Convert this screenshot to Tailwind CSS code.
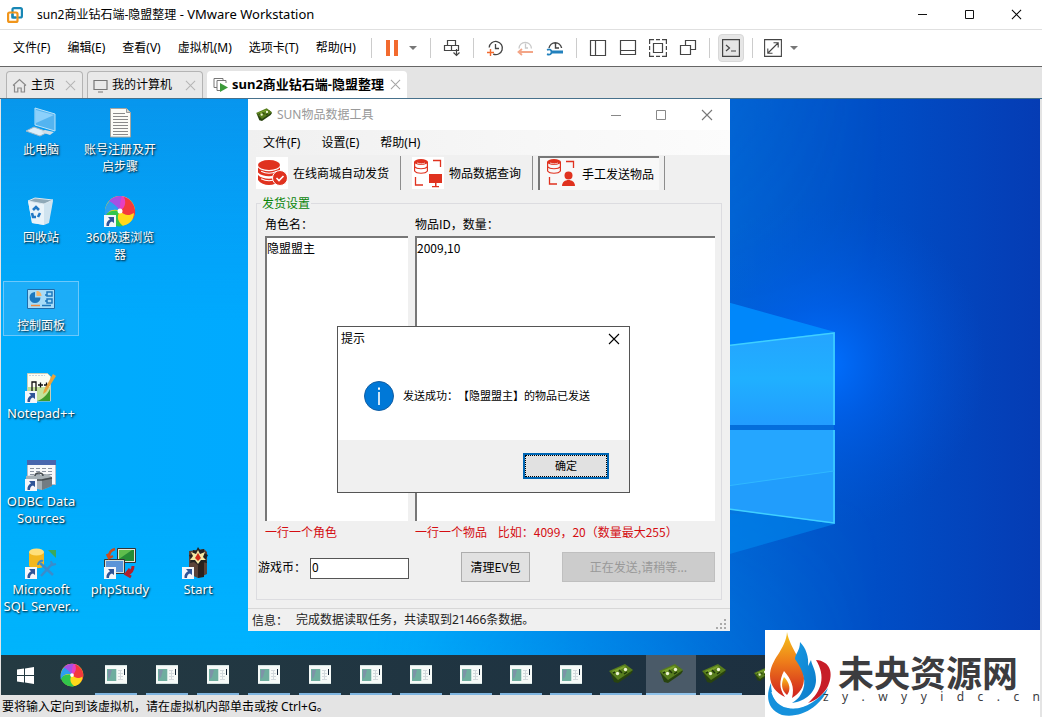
<!DOCTYPE html>
<html lang="zh-CN">
<head>
<meta charset="utf-8">
<title>sun2商业钻石端-隐盟整理 - VMware Workstation</title>
<script src="https://cdn.jsdelivr.net/npm/@tailwindcss/browser@4"></script>
</head>
<body class="flex h-screen flex-col overflow-hidden bg-[#e4e4e4] font-['Noto_Sans','Noto_Sans_CJK_SC',sans-serif] text-xs text-black">

<svg class="hidden" aria-hidden="true">
  <defs>
    <symbol id="shortcut" viewBox="0 0 12 12"><path fill="#f4f6fa" d="M0 0h12v12H0z"/><path fill="#2f5597" d="M4 2h6v6L8 6.500C6 7 5 8.500 5 11H2.500C2 8 3.500 5.500 6 4.300z"/></symbol>
    <symbol id="x" viewBox="0 0 12 12"><path d="m1 1 10 10M11 1 1 11" fill="none" stroke="currentColor" stroke-width="1.100"/></symbol>
    <symbol id="app" viewBox="0 0 22 19">
      <path fill="#f6faf8" d="M0 0h22v19H0z"/><path fill="#d3e2e0" d="M0 0h22v1H0zM0 18h22v1H0z"/>
      <path fill="#6fae9f" d="M2 4h9v12H2z"/><path fill="#7d93a8" d="M3 5h4l-2 7-2 2z"/><path fill="#cfe6df" d="M11 4h1v12h-1z"/>
      <path stroke="#d3dadd" d="M13 5.500h4M13 8.500h5M13 11.500h5M13 14.500h5M15.500 5v10"/><path fill="#123" d="M19 4h1v6h-1z"/>
    </symbol>
    <symbol id="card" viewBox="0 0 24 20">
      <path fill="#28430f" d="m1 8 3-1 16-4 4 4-2 3-13 9-4-1z"/><path fill="#577d1d" d="m0 7 16-7 8 6L9 16z"/>
      <path fill="#7ba32d" d="m3 7 12-5 2 1L5 9z"/><circle cx="8.500" cy="9.500" r="1.700" fill="#eff5d2"/><circle cx="16.500" cy="5.500" r="1.700" fill="#eff5d2"/>
      <path stroke="#1d330c" stroke-width="1.500" d="m10 6 3 3M18 8l-3 2M6 8l-2 1"/>
    </symbol>
    <symbol id="swirl" viewBox="0 0 32 32">
      <circle cx="16" cy="16" r="15" fill="#ffd91a"/>
      <path fill="#e73fc0" d="M5 6A15 15 0 0 1 25 4c2 5-3 10-9 12-3-1-2-7-11-10z"/>
      <path fill="#f4393c" d="M20 2c10 3 14 14 9 22-5-1-10-5-13-8 4-2 7-8 4-14z"/>
      <path fill="#ffd91a" d="M30 18c0 8-7 13-14 13-2-5-2-11 0-15 5 5 9 5 14 2z"/>
      <path fill="#31c64b" d="M19 31C11 33 3 27 1 20c5-5 10-5 15-4-4 6-2 11 3 15z"/>
      <path fill="#2d9ef0" d="M1 22C0 14 2 8 8 4c6 2 8 7 8 12-7-3-12 0-15 6z"/>
      <path fill="#a650e4" d="M5 6c4-4 8-5 13-5-2 4-2 10-2 15-3-5-7-8-11-10z"/>
      <circle cx="16" cy="16" r="2.500" fill="#fff"/>
    </symbol>
    <symbol id="db" viewBox="0 0 14 15" preserveAspectRatio="none"><ellipse cx="7" cy="3" rx="7" ry="3" fill="currentColor"/><path d="M.6 3v9c2 3 10.800 3 12.800 0V3M.6 7.500c2 3 10.800 3 12.800 0" stroke="currentColor" stroke-width="1.200" fill="none"/><path d="M3 4c3 1 6 1 8 0" stroke="#fff" stroke-width=".7" fill="none"/></symbol>
    <symbol id="dbfull" viewBox="0 0 14 15" preserveAspectRatio="none"><ellipse cx="7" cy="3" rx="7" ry="3" fill="currentColor"/><path fill="currentColor" d="M0 4.500c3 3 11 3 14 0v3c-3 3-11 3-14 0zM0 9c3 3 11 3 14 0v3c-3 4-11 4-14 0z"/><path d="M2 6.700c3 1.500 7 1.500 10 0M2 11.200c3 1.500 7 1.500 10 0" stroke="#fff" stroke-width=".7" fill="none"/></symbol>
  </defs>
</svg>

<header class="flex h-[30px] shrink-0 items-center border-b border-[#e0e0e0] bg-white pl-[7px]">
  <svg class="size-4 shrink-0" viewBox="0 0 16 16" fill="none" stroke-width="2.200"><rect x="5.500" y="1.100" width="9.400" height="9.400" rx="1.500" stroke="#1887b5"/><rect x="1.100" y="5.500" width="9.400" height="9.400" rx="1.500" stroke="#f0951b"/><path d="M5.500 7V10.500H9" stroke="#1887b5"/></svg>
  <h1 class="ml-3.5 flex-1 whitespace-nowrap">sun2商业钻石端-隐盟整理<span class="text-[13px]"> - VMware Workstation</span></h1>
  <div class="flex h-full">
    <button aria-label="最小化" class="flex w-[47px] items-center justify-center"><svg class="size-[11px]" viewBox="0 0 11 11"><path d="M1 5.500h9" stroke="#111"/></svg></button>
    <button aria-label="最大化" class="flex w-[47px] items-center justify-center"><svg class="size-[11px]" viewBox="0 0 11 11"><path d="M1.500 1.500h8v8h-8z" fill="none" stroke="#111"/></svg></button>
    <button aria-label="关闭" class="mr-0.5 flex w-[47px] items-center justify-center"><svg class="size-[11px]"><use href="#x"/></svg></button>
  </div>
</header>

<div class="flex h-[37px] shrink-0 items-center border-b border-[#666] bg-white pl-[13px]">
  <nav class="flex w-[358px] shrink-0 gap-[17px] whitespace-nowrap">
    <button>文件(F)</button><button>编辑(E)</button><button>查看(V)</button><button>虚拟机(M)</button><button>选项卡(T)</button><button>帮助(H)</button>
  </nav>
  <div class="flex h-full items-center text-[#444]">
    <i class="h-5 w-px bg-[#ccc]"></i>
    <button aria-label="挂起" class="flex w-[58px] items-center gap-2.5 pl-[13px]">
      <svg class="h-4 w-3.5" viewBox="0 0 14 16"><path fill="#f26a2e" d="M1 0h4v16H1zM9 0h4v16H9z"/></svg>
      <svg class="h-1 w-2" viewBox="0 0 8 4"><path fill="#777" d="M0 0h8L4 4z"/></svg>
    </button>
    <i class="h-5 w-px bg-[#ccc]"></i>
    <button aria-label="发送 Ctrl+Alt+Del" class="flex w-[42px] justify-center"><svg class="size-[18px]" viewBox="0 0 18 18" fill="none" stroke="#444" stroke-width="1.200"><path d="M4.500 1.500h8v5h-8zM1.500 6.500h7v5h-7zM8.500 6.500h7v5h-7M13.500 10v6M10.500 13.500l3 3 3-3"/></svg></button>
    <i class="h-5 w-px bg-[#ccc]"></i>
    <div class="flex w-[102px] justify-center">
      <button aria-label="拍摄快照" class="flex w-[30px] justify-center"><svg class="size-[18px]" viewBox="0 0 18 18" fill="none"><path d="M3.200 8.500a6.600 6.600 0 1 1 4 6.600M9.500 5v4.500H13" stroke="#444" stroke-width="1.300"/><path d="M4.500 10v7M1 13.500h7" stroke="#f26a2e" stroke-width="1.400"/></svg></button>
      <button aria-label="恢复快照" class="flex w-[30px] justify-center"><svg class="size-[18px]" viewBox="0 0 18 18" fill="none"><path d="M3 9.500a6.200 6.200 0 0 1 12.400 0M9.500 4.500V9H12" stroke="#c9c9c9" stroke-width="1.300"/><path d="M17 13H3M6 10l-3.500 3L6 16" stroke="#f3a587" stroke-width="1.800"/></svg></button>
      <button aria-label="管理快照" class="flex w-[30px] justify-center"><svg class="size-[18px]" viewBox="0 0 18 18" fill="none"><path d="M3 9a6.400 6.400 0 0 1 12.600 0M9.500 4.500V9H13" stroke="#444" stroke-width="1.400"/><path d="M1 10.800c3-1.300 4.500.200 4.500 2.200S4 16.500 1 15.200" stroke="#2281bd" stroke-width="1.800"/><path d="M5 13h12" stroke="#2281bd" stroke-width="3"/></svg></button>
    </div>
    <i class="h-5 w-px bg-[#ccc]"></i>
    <div class="flex w-[132px] justify-center">
      <button aria-label="显示库" class="flex w-[30px] justify-center"><svg class="size-[18px]" viewBox="0 0 18 18" fill="none" stroke="#444" stroke-width="1.200"><path d="M1.500 1.500h15v15h-15zM6.500 1.500v15"/></svg></button>
      <button aria-label="显示缩略图栏" class="flex w-[30px] justify-center"><svg class="size-[18px]" viewBox="0 0 18 18" fill="none" stroke="#444" stroke-width="1.200"><path d="M1.500 1.500h15v14h-15zM1.500 11.500h15"/></svg></button>
      <button aria-label="全屏" class="flex w-[30px] justify-center"><svg class="size-[18px]" viewBox="0 0 18 18" fill="none" stroke="#444" stroke-width="1.200"><path d="M.6 5V.6H5M7 .6h4M13 .6h4.400V5M.6 13v4.400H5M7 17.400h4M13 17.400h4.400V13M.6 7v4M17.400 7v4M4.500 4.500h9v9h-9z"/></svg></button>
      <button aria-label="Unity 模式" class="flex w-[30px] justify-center"><svg class="size-[18px]" viewBox="0 0 18 18" fill="none" stroke="#444" stroke-width="1.200"><path d="M6.500 6V1.500h10v9H12M1.500 6.500h10v9h-10z"/></svg></button>
    </div>
    <i class="h-5 w-px bg-[#ccc]"></i>
    <div class="flex w-[42px] justify-center">
      <button aria-label="控制台视图" class="flex h-7 w-[26px] items-center justify-center rounded border border-[#d8d8d8] bg-[#e6e6e6]"><svg class="size-[18px] shrink-0" viewBox="0 0 18 18" fill="none" stroke="#444" stroke-width="1.200"><path d="M.6.600h16.800v16.800H.6zM4 6l3.500 3L4 12M9 12h5"/></svg></button>
    </div>
    <i class="h-5 w-px bg-[#ccc]"></i>
    <button aria-label="拉伸客户机" class="flex items-center gap-2 pl-[11px]">
      <svg class="size-[18px]" viewBox="0 0 18 18" fill="none" stroke="#444" stroke-width="1.100"><path d="M.6.600h16.800v16.800H.6zM4 14 14 4M9.500 3.800h4.700v4.700M3.800 9.500v4.700h4.700"/></svg>
      <svg class="h-1 w-2" viewBox="0 0 8 4"><path fill="#777" d="M0 0h8L4 4z"/></svg>
    </button>
  </div>
</div>

<div role="tablist" class="flex h-8 shrink-0 items-end gap-1 border-b border-[#47718c] pl-1.5 whitespace-nowrap">
  <button role="tab" class="flex h-[27px] w-[77px] items-center rounded-t border border-b-0 border-[#b4b4b4] bg-[#e9e9e9] pl-[5px]">
    <svg class="mr-1 size-[15px]" viewBox="0 0 15 15" fill="none" stroke="#8a8a8a" stroke-width="1.200"><path d="m1 7.500 6.500-6 6.500 6M2.500 7v7h3.300v-4h3.400v4h3.300V7"/></svg>主页
    <svg class="ml-auto mr-1.5 size-[11px] text-[#b5b5b5]"><use href="#x"/></svg>
  </button>
  <button role="tab" class="flex h-[27px] w-[116px] items-center rounded-t border border-b-0 border-[#b4b4b4] bg-[#e9e9e9] pl-[5px]">
    <svg class="mr-1 size-[15px]" viewBox="0 0 15 15" fill="none" stroke="#777" stroke-width="1.200"><path d="M1 2.500h13v9H1zM5 14h5"/></svg>我的计算机
    <svg class="ml-auto mr-1.5 size-[11px] text-[#b5b5b5]"><use href="#x"/></svg>
  </button>
  <button role="tab" aria-selected="true" class="flex h-[27px] w-[200px] items-center rounded-t bg-white pl-1.5 text-[13px] font-bold">
    <svg class="mr-1 size-[15px] shrink-0" viewBox="0 0 15 15" fill="none"><path d="M4 10.500H1V1.500h9v2M4 13.500v-10h9V6M4 13.500h3" stroke="#777"/><path fill="#3c9a3a" d="m7 6 8 4.500L7 15z"/></svg>sun2商业钻石端-隐盟整理
    <svg class="ml-auto mr-1.5 size-[11px] shrink-0 text-[#a5a5a5]"><use href="#x"/></svg>
  </button>
</div>

<main class="relative mr-0.5 ml-px min-h-0 flex-1 overflow-hidden bg-[#0078e0]">
  <svg class="absolute inset-0 size-full" viewBox="0 0 1039 556" preserveAspectRatio="none" aria-hidden="true">
    <defs>
      <linearGradient id="base"><stop offset="0" stop-color="#00acfb"/><stop offset=".24" stop-color="#00aaff"/><stop offset=".4" stop-color="#009cf7"/><stop offset=".55" stop-color="#007ee6"/><stop offset=".72" stop-color="#0060d2"/><stop offset=".84" stop-color="#004ec6"/><stop offset="1" stop-color="#053cb4"/></linearGradient>
      <linearGradient id="shade" x2="0" y2="1"><stop offset="0" stop-color="#1470d0" stop-opacity=".35"/><stop offset=".4" stop-color="#1470d0" stop-opacity="0"/><stop offset=".7" stop-color="#00c4ff" stop-opacity="0"/><stop offset="1" stop-color="#00c4ff" stop-opacity=".35"/></linearGradient>
      <linearGradient id="fade"><stop offset="0" stop-color="#fff"/><stop offset=".35" stop-color="#fff"/><stop offset=".85" stop-color="#000"/></linearGradient>
      <mask id="leftside"><path fill="url(#fade)" d="M0 0h1039v556H0z"/></mask>
      <radialGradient id="glow"><stop offset="0" stop-color="#0070ff"/><stop offset=".35" stop-color="#0064f4" stop-opacity=".6"/><stop offset="1" stop-color="#0055d8" stop-opacity="0"/></radialGradient>
      <linearGradient id="pane" x2="0" y2="1"><stop offset="0" stop-color="#24a4ff"/><stop offset=".5" stop-color="#20b0ff"/><stop offset="1" stop-color="#229cff"/></linearGradient>
    </defs>
    <path fill="url(#base)" d="M0 0h1039v556H0z"/>
    <path fill="url(#shade)" mask="url(#leftside)" d="M0 0h1039v556H0z"/>
    <ellipse cx="825" cy="265" rx="160" ry="165" fill="url(#glow)"/>
    <path fill="#008eff" fill-opacity=".85" d="m690 193 144 40-144 20z"/>
    <path fill="#0088ee" fill-opacity=".6" d="m690 405 144 20-144 41z"/>
    <path fill="#0575dc" d="M690 250h143v165H690z" opacity=".7"/>
    <path fill="url(#pane)" d="m690 251 144-18v93H690z"/>
    <path fill="#219dfc" d="M690 331h144v94l-144-20z"/>
    <path fill="#25a6ff" d="M690 331h144v41l-144 20z"/>
    <path d="m690 251 143-17v92M833 331v93l-143-19" fill="none" stroke="#3fd0ff" stroke-width="1.500"/>
    <path d="m690 392 143-20" stroke="#30b8ff"/>
  </svg>

  <div class="absolute top-1.5 left-0.5 grid auto-rows-[88px] grid-cols-[repeat(3,78px)] text-center leading-[17px] whitespace-nowrap text-white text-shadow-[1px_1px_2px_#000]">
    <a href="#" class="mr-0.5 flex flex-col items-center pt-0.5"><svg class="mb-0.5 size-8 shrink-0" viewBox="0 0 32 32"><path fill="#dceefa" stroke="#9fb8c8" d="m1 24 8-4 14 5-8 4z"/><path fill="#54b4f0" stroke="#b9e3fa" d="m10 1 20 6v17l-20-6z"/><path fill="#8bd0fb" d="m11 3 18 5-18 8z"/><path fill="#cfdde6" d="m20 23 9 2-4 3-9-3z"/></svg>此电脑</a>
    <a href="#" class="flex flex-col items-center pt-0.5"><svg class="mb-0.5 size-8 shrink-0" viewBox="0 0 32 32"><path fill="#fbfbf6" stroke="#a6a6a0" d="M6.500 1.500h16l4 4V30h-20z"/><path fill="#d8d8d0" stroke="#999" d="M22.500 1.500v4h4"/><path stroke="#8a8a8a" d="M9 6.500h12M9 9.500h15M9 12.500h15M9 15.500h15M9 18.500h15M9 21.500h15M9 24.500h15M9 27.500h15"/></svg><span>账号注册及开<br>启步骤</span></a>
    <i></i>
    <a href="#" class="mr-0.5 flex flex-col items-center pt-0.5"><svg class="mb-0.5 size-8 shrink-0" viewBox="0 0 32 32"><path fill="#cfe3ef" d="m3 6 25 0-4 22-5 2-12-2z"/><path fill="#e9f3f9" d="m3 6 4 22 12 2V9z"/><path fill="#8fa9b8" stroke="#dbe8f0" d="m3 6 7-3 18 2-9 4z"/><path fill="none" stroke="#2278c4" stroke-width="2.600" d="m8 15 3-3 3 3M15 18l-2 4M11 22H8l-1-4"/></svg>回收站</a>
    <a href="#" class="flex flex-col items-center pt-0.5"><svg class="mb-0.5 size-8 shrink-0" viewBox="0 0 32 32"><use href="#swirl"/><use href="#shortcut" y="20" width="12" height="12"/></svg><span>360极速浏览<br>器</span></a>
    <i></i>
    <a href="#" class="mr-0.5 mb-[33px] flex flex-col items-center border border-[#6cc8fb] bg-[#2eb0f6]/60 pt-px"><svg class="mb-0.5 size-8 shrink-0" viewBox="0 0 32 32"><path fill="#a6dcf8" stroke="#1f6caa" d="M2.500 6.500h27v19h-27z"/><path fill="#1c78bd" d="M10 9a5.500 5.500 0 1 0 5.500 5.500H10z"/><path fill="#f5b56a" d="M11.500 8v5h5c0-3-2-5-5-5z"/><path fill="none" stroke="#1c78bd" stroke-width="1.500" d="M20 12h2M20 18h2M22 9h5v4h-5zM22 16h5v4h-5z"/><path stroke="#f08a3c" stroke-width="1.500" d="M6 22.500h9"/><path stroke="#1c78bd" stroke-width="1.500" d="M17 22.500h9"/></svg>控制面板</a>
    <i></i><i></i>
    <a href="#" class="mr-0.5 flex flex-col items-center pt-0.5 text-[13px] leading-[17px]"><svg class="mb-0.5 size-8 shrink-0" viewBox="0 0 32 32"><path fill="#fbfdf2" stroke="#c9cdb8" d="M2.500 2.500h20l3 3V30h-23z"/><path fill="#c4e39a" d="M3 16h22v14H3z"/><path fill="#3e9b2c" d="M25 18v12H12c6-2 10-6 13-12z"/><path stroke="#c9d3dd" stroke-dasharray="2 1" d="M4 4.500h16"/><path d="M7 20v-9h4v9M13 14h5M15.500 11.500v5M19 14h5M21.500 11.500v5" fill="none" stroke="#111" stroke-width="1.300"/><path fill="#e8a33a" d="m28 3 3 2-10 16-3 2 1-4z"/><use href="#shortcut" y="20" width="12" height="12"/></svg>Notepad++</a>
    <i></i><i></i>
    <a href="#" class="mr-0.5 flex flex-col items-center pt-0.5 text-[13px] leading-[17px]"><svg class="mb-0.5 size-8 shrink-0" viewBox="0 0 32 32"><path fill="#f7f8fa" stroke="#b3bcc9" d="M2.500 1.500h28v24h-28z"/><path fill="#4866ad" d="M2 1h29v5H2z"/><path stroke="#8b93a1" stroke-dasharray="4 2" d="M5 9.500h24M5 12.500h24M5 15.500h24"/><path fill="#a7b0b6" d="m1 17 22-2 4 3v9l-10 4L1 28z"/><path fill="#737c83" d="m17 20 10-2v9l-10 4z"/><path fill="none" stroke="#454b50" stroke-width="1.500" d="M10 17c0-4 8-4 8 0M1 21h16l10-2"/><use href="#shortcut" y="20" width="12" height="12"/></svg><span>ODBC Data<br>Sources</span></a>
    <i></i><i></i>
    <a href="#" class="mr-0.5 flex flex-col items-center pt-0.5 text-[13px] leading-[17px]"><svg class="mb-0.5 size-8 shrink-0" viewBox="0 0 32 32"><path fill="#f2b720" d="M4 5v14c2 3 13 3 15 0V5z"/><ellipse cx="11.500" cy="5" rx="7.500" ry="3.500" fill="#ffe07a"/><path fill="#3ca85a" d="M23 3h8v8z"/><path d="m15 16 13 12M28 16 16 29" stroke="#3b8ccb" stroke-width="2.500"/><path d="M13 18c0-3 3-5 5-4M26 14l1 4 4-1" fill="none" stroke="#3b8ccb" stroke-width="2"/><use href="#shortcut" y="20" width="12" height="12"/></svg><span>Microsoft<br>SQL Server...</span></a>
    <a href="#" class="flex flex-col items-center pt-0.5 text-[13px] leading-[17px]"><svg class="mb-0.5 size-8 shrink-0" viewBox="0 0 32 32"><path fill="#e5e5da" stroke="#333" d="M13.500 1.500h18v14h-18z"/><path fill="#258c36" d="M15 3h15v11H15z"/><path fill="#5fbd4c" d="M15 3h13L15 12z"/><path fill="#d4ded9" stroke="#333" d="M.5 12.500h20v14H.5z"/><path fill="#5a94d8" d="M2 14h17v11H2z"/><path d="M5 10c0-5 2-7 6-8M3 7l2 4 4-2" fill="none" stroke="#cc4a1d" stroke-width="2.500"/><path d="M29 19c0 5-2 7-6 8M26 22l-4 5 5 3" fill="none" stroke="#b3202a" stroke-width="3"/><use href="#shortcut" y="20" width="12" height="12"/></svg>phpStudy</a>
    <a href="#" class="flex flex-col items-center pt-0.5 text-[13px] leading-[17px]"><svg class="mb-0.5 size-8 shrink-0" viewBox="0 0 32 32"><path fill="#5b4339" d="m7 4 15-2 3 3v22l-9 4-9-4z"/><path fill="#2b211e" d="M16 12h6v18l-6 1z"/><path fill="#222" d="m16 0 2 3 4-1v4l4 2-2 4 1 4-5-1-4 3-4-3-4 1 1-4-2-4 4-1V3l3 1z"/><path fill="#f3e8a4" d="m16 3 2 4 5-2-2 5 3 3-5 0-3 4-3-4H8l3-4-2-4 5 2z"/><path fill="#d02c1b" d="m16 6 3 5-3 3-3-3z"/><use href="#shortcut" y="20" width="12" height="12"/></svg>Start</a>
  </div>

  <section aria-label="SUN物品数据工具" class="absolute top-0 left-[247px] flex h-[532px] w-[482px] flex-col bg-[#f0f0f0] font-['Noto_Sans_CJK_SC',sans-serif] leading-4">
    <div class="flex h-[31px] shrink-0 items-center bg-white pl-2 text-[#999]">
      <svg class="mr-[5px] h-[14px] w-4"><use href="#card"/></svg>
      <h2 class="flex-1 font-['Noto_Sans','Noto_Sans_CJK_SC',sans-serif]">SUN物品数据工具</h2>
      <button aria-label="最小化" class="flex h-full w-[45px] items-center justify-center"><svg class="size-3" viewBox="0 0 12 12"><path d="M1 6.500h10" stroke="#888"/></svg></button>
      <button aria-label="最大化" class="flex h-full w-[46px] items-center justify-center"><svg class="size-3" viewBox="0 0 12 12"><path d="M1.500 1.500h9v9h-9z" fill="none" stroke="#888"/></svg></button>
      <button aria-label="关闭" class="mr-px flex h-full w-[45px] items-center justify-center text-[#777]"><svg class="size-3"><use href="#x"/></svg></button>
    </div>
    <nav class="flex h-[25px] shrink-0 items-center gap-[21px] bg-gradient-to-r from-[#f0f0f0] to-[#fcfcfc] pl-[15px] font-['Noto_Sans','Noto_Sans_CJK_SC',sans-serif]">
      <button>文件(F)</button><button>设置(E)</button><button>帮助(H)</button>
    </nav>
    <div class="flex h-9 shrink-0 items-center whitespace-nowrap">
      <button class="flex w-[152px] items-center gap-[5px] pl-2">
        <svg class="size-8 bg-white text-[#e0321f]" viewBox="0 0 32 32"><use href="#dbfull" x="2" y="3" width="22" height="25"/><circle cx="24" cy="21" r="7.500" fill="#e0321f" stroke="#fff"/><path d="m20.500 21 2.500 2.500 4.500-4.500" fill="none" stroke="#fff" stroke-width="1.600"/></svg>在线商城自动发货
      </button>
      <i class="h-[34px] w-px bg-[#8d8d8d]"></i>
      <button class="flex w-[131px] items-center gap-[5px] pl-[11px]">
        <svg class="size-8 bg-white text-[#e0321f]" viewBox="0 0 32 32"><use href="#db" x="2" y="2" width="14" height="15"/><path d="M21 3.500h7.500V10M3.500 20v8H11" fill="none" stroke="#e0321f" stroke-width="1.300"/><path fill="#e0321f" d="M17 17h13v9H17zM23 26h1.500v3H27v1.200h-7V29h3z"/></svg>物品数据查询
      </button>
      <i class="mr-[5px] h-[34px] w-px bg-[#8d8d8d]"></i>
      <button aria-pressed="true" class="flex h-[34px] w-[121px] items-center gap-[5px] border-t-2 border-l-2 border-[#777] bg-[#f8f8f8] pl-[5px]">
        <svg class="size-8 text-[#e0321f]" viewBox="0 0 32 32"><use href="#db" x="2" y="1" width="14" height="15"/><path d="M21 3.500h7.500V10M4.500 19v7H12" fill="none" stroke="#e0321f" stroke-width="1.300"/><circle cx="23.500" cy="17.500" r="4" fill="#e0321f"/><path fill="#e0321f" d="M17 28c0-8 13-8 13 0z"/></svg>手工发送物品
      </button>
      <i class="ml-[5px] h-[34px] w-px bg-[#8d8d8d]"></i>
    </div>

    <fieldset class="mx-2 mt-1 flex-1 border border-[#dcdce0] pr-1.5">
      <legend class="ml-1 px-px leading-4 text-[#0a850a]">发货设置</legend>
      <div class="grid grid-cols-[143px_1fr] gap-x-[7px] pt-[5px] pl-2">
        <label for="roles" class="mb-1">角色名：</label>
        <label for="items" class="mb-1">物品ID，数量：</label>
        <textarea id="roles" class="h-[285px] resize-none border-t-2 border-l-2 border-[#777] bg-white pt-0.5 outline-none">隐盟盟主</textarea>
        <textarea id="items" class="h-[285px] resize-none border-t-2 border-l-2 border-[#777] bg-white pt-0.5 outline-none">2009,10</textarea>
        <p class="mt-[3px] text-[#d40d12]">一行一个角色</p>
        <p class="mt-[3px] whitespace-pre text-[#d40d12]">一行一个物品    比如：4099，20（数量最大255）</p>
      </div>
      <div class="mt-3 flex items-center pl-px">
        <label for="coins" class="w-[52px] whitespace-nowrap">游戏币：</label>
        <input id="coins" value="0" class="mt-[3px] h-[21px] w-[99px] border border-[#555] bg-white pl-px pb-1 outline-none">
        <button class="ml-[52px] h-[30px] w-[69px] border border-[#adadad] bg-[#e1e1e1]">清理EV包</button>
        <button disabled class="ml-8 h-[30px] flex-1 border border-[#bfbfbf] bg-[#ccc] text-[#999]">正在发送,请稍等...</button>
      </div>
    </fieldset>
    <footer class="mt-2 flex h-[23px] shrink-0 items-center border-t border-[#d7d7d7] pl-1 text-[#222]">
      <span class="w-11">信息：</span><span class="flex-1 font-['Noto_Sans','Noto_Sans_CJK_SC',sans-serif]">完成数据读取任务，共读取到21466条数据。</span>
      <svg class="mr-0.5 size-3 self-end" viewBox="0 0 12 12" fill="#aaa"><path d="M8 0h2v2H8zM4 4h2v2H4zM8 4h2v2H8zM0 8h2v2H0zM4 8h2v2H4zM8 8h2v2H8z"/></svg>
    </footer>
  </section>

  <div role="dialog" aria-label="提示" class="absolute top-[227px] left-[336px] flex h-[167px] w-[293px] flex-col border border-[#555] bg-white">
    <div class="flex h-6 items-center justify-between pr-[9px] pl-[3px]"><h3>提示</h3><button aria-label="关闭"><svg class="size-3"><use href="#x"/></svg></button></div>
    <div class="flex flex-1 items-center gap-[9px] pl-[26px] text-[11px] whitespace-nowrap">
      <svg class="size-[30px]" viewBox="0 0 30 30"><circle cx="15" cy="15" r="14.500" fill="#0078d7" stroke="#135ea3"/><path fill="#fff" d="M14 6.500h2v2.200h-2zM14.200 11h1.600v13h-1.600z"/></svg>
      <p class="pt-0.5 [text-spacing-trim:space-all]">发送成功：【隐盟盟主】的物品已发送</p>
    </div>
    <div class="flex h-[52px] items-center justify-end bg-[#f0f0f0] pr-5"><button class="flex h-[26px] w-[86px] items-center justify-center border-2 border-[#0066b4] bg-[#e1e1e1] text-[11px] outline-1 -outline-offset-3 outline-dotted outline-black">确定</button></div>
  </div>
</main>

<nav aria-label="任务栏" class="mr-0.5 ml-px flex h-10 shrink-0 items-stretch overflow-hidden bg-gradient-to-r from-[#243a42] to-[#1a2d40]">
  <button aria-label="开始" class="flex w-[49px] shrink-0 items-center justify-center"><svg class="size-[17px]" viewBox="0 0 17 17" fill="#fff"><path d="m0 2.500 7-1V8H0zM8 1.400 17 0v8H8zM0 9h7v6.500l-7-1zM8 9h9v8l-9-1.400z"/></svg></button>
  <button aria-label="360极速浏览器" class="mr-px flex w-11 shrink-0 items-center justify-center"><svg class="size-6"><use href="#swirl"/></svg></button>
  <div class="mr-[9px] flex shrink-0 gap-[9px]">
    <button aria-label="窗口 1" class="flex w-[42px] items-center justify-center border-b-2 border-[#7fb5e0]"><svg class="h-[19px] w-[22px]"><use href="#app"/></svg></button>
    <button aria-label="窗口 2" class="flex w-[42px] items-center justify-center border-b-2 border-[#7fb5e0]"><svg class="h-[19px] w-[22px]"><use href="#app"/></svg></button>
    <button aria-label="窗口 3" class="flex w-[42px] items-center justify-center border-b-2 border-[#7fb5e0]"><svg class="h-[19px] w-[22px]"><use href="#app"/></svg></button>
    <button aria-label="窗口 4" class="flex w-[42px] items-center justify-center border-b-2 border-[#7fb5e0]"><svg class="h-[19px] w-[22px]"><use href="#app"/></svg></button>
    <button aria-label="窗口 5" class="flex w-[42px] items-center justify-center border-b-2 border-[#7fb5e0]"><svg class="h-[19px] w-[22px]"><use href="#app"/></svg></button>
  </div>
  <div class="flex shrink-0 gap-2">
    <button aria-label="窗口 6" class="flex w-[42px] items-center justify-center border-b-2 border-[#7fb5e0]"><svg class="h-[19px] w-[22px]"><use href="#app"/></svg></button>
    <button aria-label="窗口 7" class="flex w-[42px] items-center justify-center border-b-2 border-[#7fb5e0]"><svg class="h-[19px] w-[22px]"><use href="#app"/></svg></button>
    <button aria-label="窗口 8" class="flex w-[42px] items-center justify-center border-b-2 border-[#7fb5e0]"><svg class="h-[19px] w-[22px]"><use href="#app"/></svg></button>
    <button aria-label="窗口 9" class="flex w-[42px] items-center justify-center border-b-2 border-[#7fb5e0]"><svg class="h-[19px] w-[22px]"><use href="#app"/></svg></button>
    <button aria-label="窗口 10" class="flex w-[42px] items-center justify-center border-b-2 border-[#7fb5e0]"><svg class="h-[19px] w-[22px]"><use href="#app"/></svg></button>
    <button aria-label="数据工具 1" class="flex w-[42px] items-center justify-center border-b-2 border-[#7fb5e0]"><svg class="h-5 w-6"><use href="#card"/></svg></button>
  </div>
  <button aria-label="数据工具 2" class="mx-1 flex w-[50px] shrink-0 items-center justify-center border-b-2 border-[#8fc2ea] bg-[#4a5a68]"><svg class="h-5 w-6"><use href="#card"/></svg></button>
  <button aria-label="数据工具 3" class="flex w-[42px] shrink-0 items-center border-b-2 border-[#7fb5e0] pl-0.5"><svg class="h-5 w-6"><use href="#card"/></svg></button>
  <button aria-label="数据工具 4" class="ml-3 flex shrink-0 items-center"><svg class="h-[14px] w-4"><use href="#card"/></svg></button>
</nav>

<footer class="h-[22px] shrink-0 pl-0.5 leading-[24px] whitespace-nowrap">要将输入定向到该虚拟机，请在虚拟机内部单击或按 Ctrl+G。</footer>

<aside class="absolute right-0.5 bottom-0 flex h-[87px] w-[275px] bg-white text-[#3c3c3f]">
  <svg class="h-[87px] w-[70px] shrink-0" viewBox="0 0 70 87" aria-hidden="true">
    <defs>
      <linearGradient id="flame" x2="0" y2="1"><stop offset="0" stop-color="#f5c51c"/><stop offset=".45" stop-color="#ee7d1a"/><stop offset="1" stop-color="#d0201f"/></linearGradient>
      <linearGradient id="water" x2="1" y2="1"><stop offset="0" stop-color="#189ae4"/><stop offset="1" stop-color="#0b7ac8"/></linearGradient>
    </defs>
    <path fill="url(#flame)" d="M22 2c-1 18-17 27-17 44 0 9 6 17 15 21-6-9-6-16-1-26 7 8 11 16 8 27 8-5 12-11 12-20C39 31 25 19 22 2z"/>
    <path fill="url(#flame)" d="M19 47c-3 6-3 13 3 18 4-5 3-12-3-18z"/>
    <path fill="url(#water)" d="M35 12c0 9-5 12-5 17 8 11 13 24 6 35-2 4-5 6-9 9 14-2 24-11 24-23 0-10-4-14-5-20l-3 6c1-9-2-18-8-24z"/>
    <path fill="#c71d28" d="M51 30c14 1 18 13 12 26-4 8-11 14-20 17 14-12 18-27 8-43z"/>
    <path fill="#1591dc" d="M6 53c-6 14-3 27 11 32 20 4 40-10 46-27-11 14-26 23-40 20C11 76 6 66 6 53z"/>
    <path d="M7 62c4 13 17 19 33 13" fill="none" stroke="#fff" stroke-width="1.500"/>
  </svg>
  <div class="flex flex-1 flex-col pt-[23px]">
    <strong class="ml-[3px] font-['Noto_Sans_CJK_SC',sans-serif] text-[36px] leading-9 font-bold whitespace-nowrap">未央资源网</strong>
    <div class="-ml-3 flex justify-between pt-0.5 text-xs leading-3"><span>z</span><span>y</span><span>.</span><span>w</span><span>y</span><span>y</span><span>i</span><span>d</span><span>c</span><span>.</span><span>c</span><span>n</span></div>
  </div>
</aside>
</body>
</html>
